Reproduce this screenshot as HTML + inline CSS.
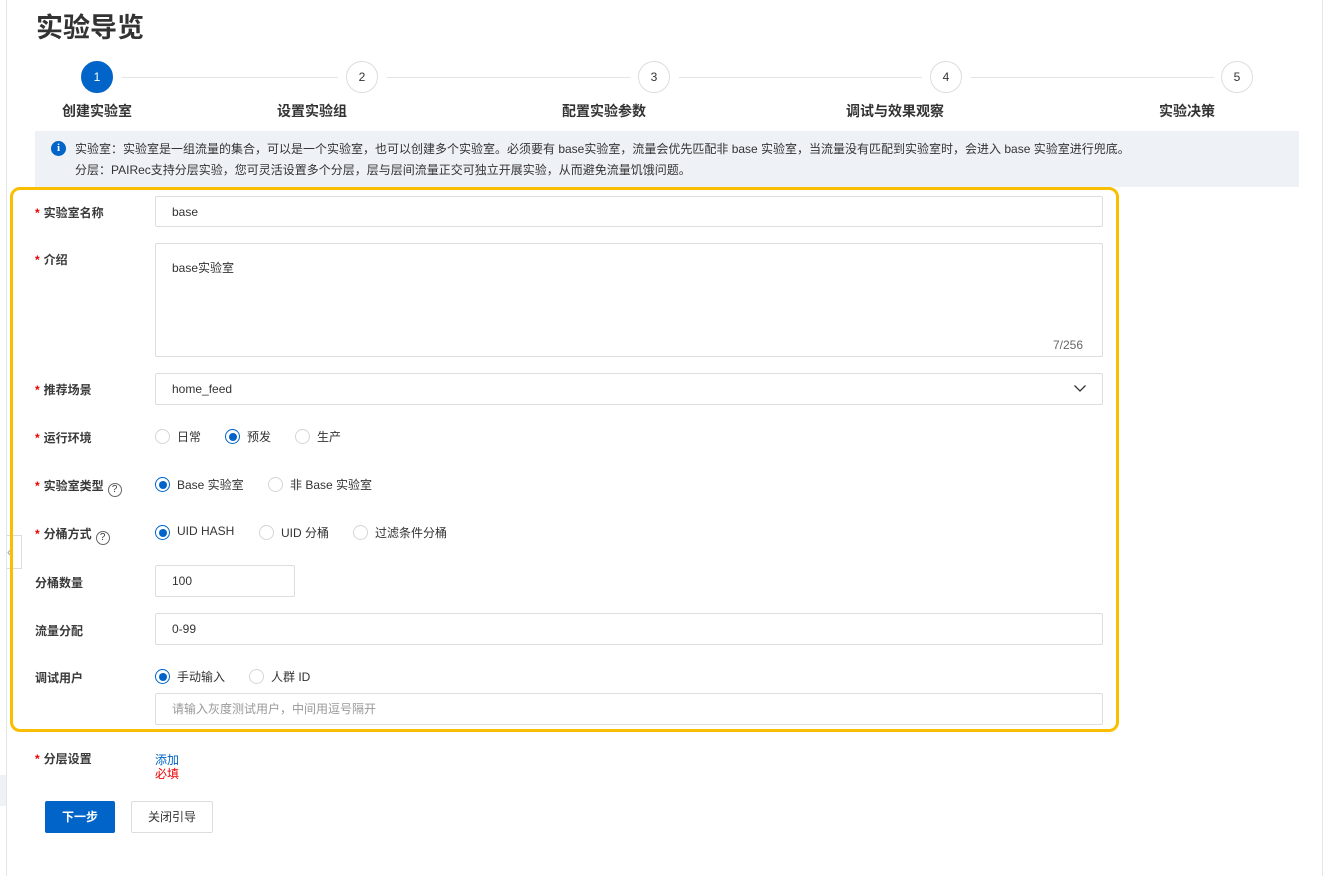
<!DOCTYPE html>
<html><head><meta charset="utf-8"><style>
*{box-sizing:border-box;margin:0;padding:0}
body{width:1327px;height:876px;background:#fff;font-family:"Liberation Sans","Noto Sans CJK SC",sans-serif;color:#333;position:relative;overflow:hidden;font-size:12px}
.a{position:absolute}
.t{position:absolute;white-space:nowrap}
.step{position:absolute;width:32px;height:32px;border-radius:50%;border:1px solid #ddd;background:#fff;text-align:center;line-height:30px;font-size:12px;color:#333;top:61px}
.line{position:absolute;top:77px;height:1px;background:#e3e3e3}
.sl{position:absolute;top:101px;font-size:14px;font-weight:bold;color:#333;white-space:nowrap}
.lab{position:absolute;left:35px;font-size:12px;font-weight:bold;color:#3a3a3a;white-space:nowrap}
.lab b{color:#e00;margin-right:4px}
.inp{position:absolute;left:155px;border:1px solid #ddd;border-radius:2px;background:#fff;font-size:12px;color:#333;padding-left:16px;line-height:30px}
.r{position:absolute;width:15px;height:15px;border-radius:50%;border:1px solid #d5d5d5;background:#fff}
.r.on{border-color:#0064c8}
.r.on:after{content:"";position:absolute;left:2.5px;top:2.5px;width:8px;height:8px;border-radius:50%;background:#0064c8}
.rt{position:absolute;font-size:12px;color:#333;white-space:nowrap}
.q{display:inline-block;width:14px;height:14px;border:1px solid #666;border-radius:50%;font-size:10px;line-height:12px;text-align:center;font-weight:normal;margin-left:4px;vertical-align:-2px}
</style></head><body>
<div class="a" style="left:6px;top:0;width:1px;height:876px;background:#e5e5e5"></div>
<div class="a" style="left:1322px;top:0;width:1px;height:876px;background:#e5e5e5"></div>
<div class="a" style="left:0;top:775px;width:6px;height:31px;background:#eef1f6"></div>
<div class="a" style="left:7px;top:535px;width:15px;height:34px;border:1px solid #ddd;border-left:none;background:#fff;color:#999;font-size:12px;line-height:32px">‹</div>

<div class="t" style="left:36px;top:6px;font-size:27px;font-weight:bold;color:#333">实验导览</div>

<div class="step" style="left:81px;background:#0064c8;border-color:#0064c8;color:#fff">1</div>
<div class="line" style="left:122px;width:216px"></div>
<div class="step" style="left:346px">2</div>
<div class="line" style="left:387px;width:243px"></div>
<div class="step" style="left:638px">3</div>
<div class="line" style="left:679px;width:243px"></div>
<div class="step" style="left:930px">4</div>
<div class="line" style="left:971px;width:243px"></div>
<div class="step" style="left:1221px">5</div>
<div class="sl" style="left:62px">创建实验室</div>
<div class="sl" style="left:277px">设置实验组</div>
<div class="sl" style="left:562px">配置实验参数</div>
<div class="sl" style="left:846px">调试与效果观察</div>
<div class="sl" style="left:1159px">实验决策</div>

<div class="a" style="left:35px;top:131px;width:1264px;height:56px;background:#eef1f6"></div>
<div class="a" style="left:51px;top:141px;width:15px;height:15px;border-radius:50%;background:#0064c8;color:#fff;font-size:11px;font-weight:bold;text-align:center;line-height:15px;font-family:'Liberation Serif',serif">i</div>
<div class="t" style="left:75px;top:140px;font-size:12px;color:#333">实验室：实验室是一组流量的集合，可以是一个实验室，也可以创建多个实验室。必须要有 base实验室，流量会优先匹配非 base 实验室，当流量没有匹配到实验室时，会进入 base 实验室进行兜底。</div>
<div class="t" style="left:75px;top:161px;font-size:12px;color:#333">分层：PAIRec支持分层实验，您可灵活设置多个分层，层与层间流量正交可独立开展实验，从而避免流量饥饿问题。</div>

<div class="a" style="left:10px;top:187px;width:1109px;height:545px;border:3px solid #f9be00;border-radius:10px"></div>

<div class="lab" style="top:204px"><b>*</b>实验室名称</div>
<div class="inp" style="top:196px;width:948px;height:31px">base</div>

<div class="lab" style="top:251px"><b>*</b>介绍</div>
<div class="inp" style="top:243px;width:948px;height:114px;line-height:normal;padding-top:15px">base实验室</div>
<div class="t" style="left:1053px;top:338px;color:#666">7/256</div>

<div class="lab" style="top:381px"><b>*</b>推荐场景</div>
<div class="inp" style="top:373px;width:948px;height:32px">home_feed</div>
<svg class="a" style="left:1073px;top:383px" width="14" height="10" viewBox="0 0 14 10"><path d="M1.5 2.5L7 8l5.5-5.5" fill="none" stroke="#333" stroke-width="1.3"/></svg>

<div class="lab" style="top:429px"><b>*</b>运行环境</div>
<div class="r" style="left:155px;top:429px"></div><div class="rt" style="left:177px;top:428px">日常</div>
<div class="r on" style="left:225px;top:429px"></div><div class="rt" style="left:247px;top:428px">预发</div>
<div class="r" style="left:295px;top:429px"></div><div class="rt" style="left:317px;top:428px">生产</div>

<div class="lab" style="top:477px"><b>*</b>实验室类型<span class="q">?</span></div>
<div class="r on" style="left:155px;top:477px"></div><div class="rt" style="left:177px;top:476px">Base 实验室</div>
<div class="r" style="left:268px;top:477px"></div><div class="rt" style="left:290px;top:476px">非 Base 实验室</div>

<div class="lab" style="top:525px"><b>*</b>分桶方式<span class="q">?</span></div>
<div class="r on" style="left:155px;top:525px"></div><div class="rt" style="left:177px;top:524px">UID HASH</div>
<div class="r" style="left:259px;top:525px"></div><div class="rt" style="left:281px;top:524px">UID 分桶</div>
<div class="r" style="left:353px;top:525px"></div><div class="rt" style="left:375px;top:524px">过滤条件分桶</div>

<div class="lab" style="top:574px">分桶数量</div>
<div class="inp" style="top:565px;width:140px;height:32px">100</div>

<div class="lab" style="top:622px">流量分配</div>
<div class="inp" style="top:613px;width:948px;height:32px">0-99</div>

<div class="lab" style="top:669px">调试用户</div>
<div class="r on" style="left:155px;top:669px"></div><div class="rt" style="left:177px;top:668px">手动输入</div>
<div class="r" style="left:249px;top:669px"></div><div class="rt" style="left:271px;top:668px">人群 ID</div>
<div class="inp" style="top:693px;width:948px;height:32px;color:#999">请输入灰度测试用户，中间用逗号隔开</div>

<div class="lab" style="top:750px"><b>*</b>分层设置</div>
<div class="t" style="left:155px;top:751px;color:#0064c8">添加</div>
<div class="t" style="left:155px;top:765px;color:#e00">必填</div>

<div class="a" style="left:45px;top:801px;width:70px;height:32px;background:#0064c8;border-radius:2px;color:#fff;font-weight:bold;text-align:center;line-height:32px">下一步</div>
<div class="a" style="left:131px;top:801px;width:82px;height:32px;border:1px solid #ddd;border-radius:2px;color:#333;text-align:center;line-height:30px">关闭引导</div>
</body></html>
